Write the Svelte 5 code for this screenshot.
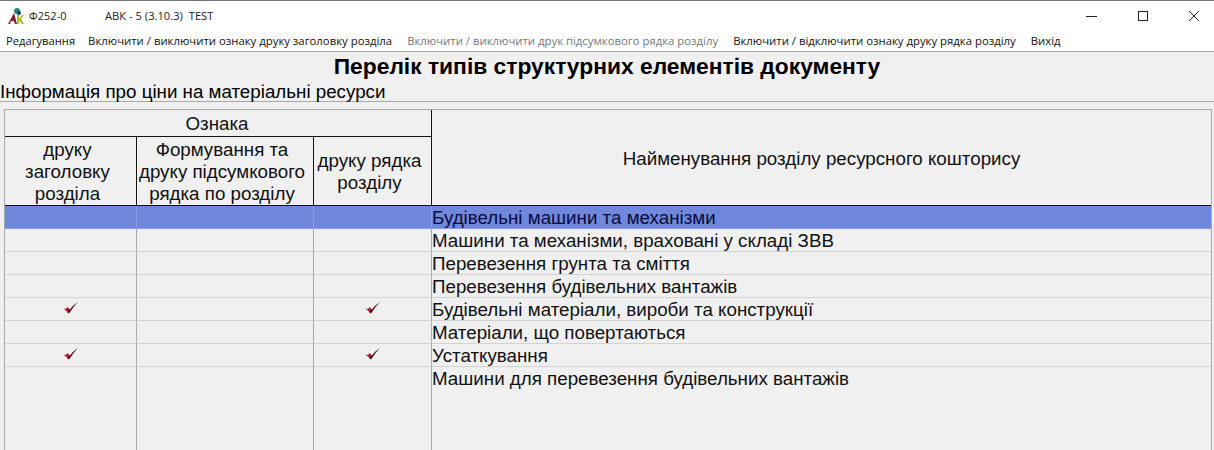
<script>
  const rows = [
    { name: 'Будівельні машини та механізми', selected: true },
    { name: 'Машини та механізми, враховані у складі ЗВВ' },
    { name: 'Перевезення грунта та сміття' },
    { name: 'Перевезення будівельних вантажів' },
    { name: 'Будівельні матеріали, вироби та конструкції', first: true, third: true },
    { name: 'Матеріали, що повертаються' },
    { name: 'Устаткування', first: true, third: true }
  ];
</script>

<svelte:head>
  <title>Ф252-0</title>
</svelte:head>

{#snippet tick()}
  <svg class="tick" width="16" height="15" viewBox="0 0 16 15">
    <path d="M0.5 7.5 L5 11.5 L7.5 9 L4.5 6 L3 8 Z" fill="#b01a35" />
    <path d="M4 11 L6 12.5 Q10 6 15 1 Q9 5 6.5 9 Z" fill="#4a0c1c" />
  </svg>
{/snippet}

<div class="window">
  <header class="titlebar">
    <svg class="logo" width="18" height="18" viewBox="0 0 18 18">
      <circle cx="10" cy="4" r="3" fill="#1c8a7c" />
      <circle cx="12" cy="6" r="2" fill="#173f6a" />
      <path d="M1 17 L7 6 L10 17 H8 L7 14 H4 L3 17 Z" fill="#8c1c34" />
      <path d="M10 8 H12 V12 L15 8 H17 L14 12 L17 17 H15 L12 13 V17 H10 Z" fill="#a9b81e" />
    </svg>
    <span class="form-code">Ф252-0</span>
    <span class="app-name">АВК - 5 (3.10.3)&nbsp; TEST</span>
    <div class="controls">
      <svg width="12" height="12" viewBox="0 0 12 12"><path d="M0 6.5 H11" stroke="#222" fill="none" /></svg>
      <svg width="12" height="12" viewBox="0 0 12 12"><rect x="1.5" y="1.5" width="9" height="9" stroke="#222" fill="none" /></svg>
      <svg width="12" height="12" viewBox="0 0 12 12"><path d="M1 1 L11 11 M11 1 L1 11" stroke="#222" fill="none" /></svg>
    </div>
  </header>

  <nav class="menu">
    <span class="first-item">Редагування</span>
    <span>Включити / виключити ознаку друку заголовку розділа</span>
    <span class="disabled">Включити / виключити друк підсумкового рядка розділу</span>
    <span>Включити / відключити ознаку друку рядка розділу</span>
    <span>Вихід</span>
  </nav>

  <main class="content">
    <h1>Перелік типів структурних елементів документу</h1>
    <div class="subtitle">Інформація про ціни на матеріальні ресурси</div>

    <div class="grid">
      <div class="head group">Ознака</div>
      <div class="head name-head">Найменування розділу ресурсного кошторису</div>
      <div class="head sub">друку<br />заголовку<br />розділа</div>
      <div class="head sub">Формування та<br />друку підсумкового<br />рядка по розділу</div>
      <div class="head sub last">друку рядка<br />розділу</div>

      {#each rows as row}
        <div class="cell mark" class:selected={row.selected}>{#if row.first}{@render tick()}{/if}</div>
        <div class="cell mark" class:selected={row.selected}></div>
        <div class="cell mark" class:selected={row.selected}>{#if row.third}{@render tick()}{/if}</div>
        <div class="cell name" class:selected={row.selected}>{row.name}</div>
      {/each}

      <div class="filler"></div>
      <div class="filler"></div>
      <div class="filler"></div>
      <div class="filler name">Машини для перевезення будівельних вантажів</div>
    </div>
  </main>
</div>

<style>
  :global(body) {
    margin: 0;
    overflow: hidden;
  }
  .window {
    width: 1214px;
    height: 450px;
    overflow: hidden;
    display: flex;
    flex-direction: column;
    background: #f0f0f0;
    font-family: 'Liberation Sans', Arial, sans-serif;
    color: #000;
  }
  .titlebar {
    height: 30px;
    box-sizing: border-box;
    border-top: 1px solid #777;
    background: #fff;
    display: flex;
    align-items: center;
    padding-left: 7px;
    font-family: 'Open Sans', 'Noto Sans', sans-serif;
    font-size: 11px;
    color: #222;
    flex: none;
  }
  .logo {
    flex: none;
  }
  .form-code {
    margin-left: 4px;
    width: 76px;
  }
  .app-name {
    font-size: 11.2px;
  }
  .controls {
    margin-left: auto;
    display: flex;
    gap: 39px;
    padding-right: 14px;
  }
  .menu {
    height: 22px;
    box-sizing: border-box;
    background: #fff;
    border-bottom: 1px solid #a8a8a8;
    display: flex;
    align-items: center;
    gap: 15px;
    padding: 0 0 0 6px;
    font-family: 'Open Sans', 'Noto Sans', sans-serif;
    font-size: 11.35px;
    color: #111;
    white-space: nowrap;
    flex: none;
  }
  .first-item {
    margin-right: -2px;
    font-size: 11.2px;
  }
  .disabled {
    color: #777;
  }
  .content {
    flex: 1;
    min-height: 0;
    display: flex;
    flex-direction: column;
  }
  h1 {
    margin: 0;
    height: 28px;
    line-height: 28px;
    text-align: center;
    font-size: 22.8px;
    font-weight: 700;
  }
  .subtitle {
    height: 21px;
    line-height: 23px;
    font-size: 18.75px;
    border-bottom: 1px solid #a8a8a8;
    white-space: nowrap;
  }
  .grid {
    margin: 7px 2px 0 4px;
    flex: none;
    height: 360px;
    display: grid;
    grid-template-columns: 132px 177px 118px 1fr;
    grid-template-rows: 27px 69px repeat(7, 23px) 1fr;
    border: 1px solid #a8a8a8;
    box-sizing: border-box;
    font-size: 18.75px;
  }
  .head {
    display: flex;
    align-items: center;
    justify-content: center;
    text-align: center;
    box-sizing: border-box;
    line-height: 22px;
    color: #111;
  }
  .group {
    grid-column: 1 / 4;
    border-bottom: 1px solid #111;
    border-right: 1px solid #111;
    padding: 2px 2px 0 0;
  }
  .name-head {
    grid-column: 4;
    grid-row: 1 / 3;
    border-bottom: 1px solid #111;
    padding-top: 2px;
  }
  .sub {
    border-bottom: 1px solid #111;
    border-right: 1px solid #111;
    white-space: nowrap;
    padding: 2px 6px 0 0;
  }
  .cell,
  .filler {
    box-sizing: border-box;
    border-right: 1px solid #a8a8a8;
  }
  .cell {
    border-bottom: 1px solid #d2d2d2;
  }
  .mark {
    display: flex;
    align-items: center;
    justify-content: center;
  }
  .name {
    line-height: 24px;
    white-space: nowrap;
    border-right: none;
    color: #111;
  }
  .selected {
    background: #6f88dc;
    border-right-color: #8a9be0;
    border-bottom-color: #8a9be0;
    color: #0a0a3a;
  }
  .tick {
    margin-top: -1px;
  }
</style>
